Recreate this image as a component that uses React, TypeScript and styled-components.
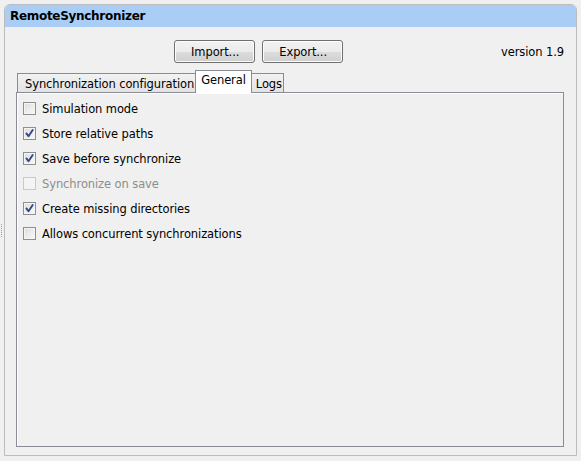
import React from 'react';
import styled, { createGlobalStyle } from 'styled-components';

const Global = createGlobalStyle`
  html, body { margin: 0; padding: 0; background: #f0f0f0; }
  body {
    font-family: "DejaVu Sans", Tahoma, sans-serif;
    font-size: 11.5px;
    color: #000;
    letter-spacing: -0.1px;
  }
  #root { width: 581px; height: 461px; }
`;

const Page = styled.div`
  display: flex;
  width: 581px;
  height: 461px;
  box-sizing: border-box;
`;

const Grip = styled.div`
  width: 4px;
  display: flex;
  align-items: center;
  flex-shrink: 0;
`;

const GripDots = styled.div`
  width: 1px;
  height: 14px;
  margin-left: 1px;
  background: repeating-linear-gradient(to bottom, #a0a0a0 0 1px, transparent 1px 2px);
`;

const Window = styled.div`
  margin: 4px 0 5px 0;
  width: 573px;
  height: 452px;
  box-sizing: border-box;
  border: 1px solid #bcbcbc;
  border-radius: 6px 6px 0 0;
  display: flex;
  flex-direction: column;
  overflow: hidden;
`;

const Header = styled.div`
  height: 22px;
  flex-shrink: 0;
  background: #a9cdf5;
  display: flex;
  align-items: center;
  padding-left: 5px;
  font-weight: bold;
  font-size: 12px;
  letter-spacing: -0.3px;
`;

const Body = styled.div`
  flex: 1;
  display: flex;
  flex-direction: column;
  padding: 13px 12px 8px 11px;
  min-height: 0;
`;

const TopRow = styled.div`
  display: flex;
  align-items: center;
  height: 23px;
`;

const ButtonGroup = styled.div`
  flex: 1;
  display: flex;
  justify-content: center;
  gap: 7px;
`;

const Button = styled.button`
  font: inherit;
  letter-spacing: inherit;
  height: 23px;
  padding: 0 15px 0 16px;
  border: 1px solid #707070;
  border-radius: 3px;
  background: linear-gradient(to bottom, #f2f2f2 0%, #ebebeb 50%, #dddddd 51%, #cfcfcf 100%);
  box-shadow: inset 0 0 0 1px #fcfcfc;
  color: #000;
`;

const Version = styled.span`
  white-space: nowrap;
`;

const TabStrip = styled.div`
  margin-top: 7px;
  display: flex;
  align-items: flex-end;
  height: 22px;
  padding-left: 1px;
  position: relative;
  z-index: 1;
`;

const Tab = styled.div<{ $active?: boolean; $pad?: string }>`
  box-sizing: border-box;
  border: 1px solid #898c95;
  border-bottom: none;
  white-space: nowrap;
  ${(p) =>
    p.$active
      ? `
    height: 23px;
    margin-bottom: -1px;
    background: #ffffff;
    padding: 2px 5px 0 5px;
    margin-left: -1px;
    margin-right: -1px;
    position: relative;
    z-index: 2;
  `
      : `
    height: 19px;
    background: linear-gradient(to bottom, #f2f2f2, #e3e3e3);
    padding: 3px ${p.$pad ?? '1px 0 7px'};
  `}
`;

const Pane = styled.div`
  flex: 1;
  box-sizing: border-box;
  border: 1px solid #898c95;
  box-shadow: inset 1px 1px 0 #ffffff;
  padding: 3px 6px;
  display: flex;
  flex-direction: column;
`;

const Row = styled.label<{ $disabled?: boolean }>`
  height: 25px;
  display: flex;
  align-items: center;
  gap: 6px;
  color: ${(p) => (p.$disabled ? '#8d8d8d' : '#000')};
`;

const Box = styled.span<{ $disabled?: boolean }>`
  width: 13px;
  height: 13px;
  box-sizing: border-box;
  border: 1px solid ${(p) => (p.$disabled ? '#c9c9c9' : '#8e8f8f')};
  background: ${(p) =>
    p.$disabled
      ? '#f4f4f4'
      : 'linear-gradient(135deg, #dcdcdc 0%, #eeeeee 60%, #fafafa 100%)'};
  box-shadow: inset 0 0 0 1px #f4f4f4;
  display: flex;
  align-items: center;
  justify-content: center;
  flex-shrink: 0;
`;

const Check = () => (
  <svg width="11" height="11" viewBox="0 0 11 11">
    <path d="M2.4 5.4 L4.5 8.3 L8.7 2" fill="none" stroke="#34488a" strokeWidth="1.9" strokeLinecap="round" strokeLinejoin="round" />
  </svg>
);

const options: { label: string; checked: boolean; disabled?: boolean }[] = [
  { label: 'Simulation mode', checked: false },
  { label: 'Store relative paths', checked: true },
  { label: 'Save before synchronize', checked: true },
  { label: 'Synchronize on save', checked: false, disabled: true },
  { label: 'Create missing directories', checked: true },
  { label: 'Allows concurrent synchronizations', checked: false },
];

export default function App() {
  return (
    <>
      <Global />
      <Page>
        <Grip>
          <GripDots />
        </Grip>
        <Window>
          <Header>RemoteSynchronizer</Header>
          <Body>
            <TopRow>
              <ButtonGroup>
                <Button>Import...</Button>
                <Button>Export...</Button>
              </ButtonGroup>
              <Version>version 1.9</Version>
            </TopRow>
            <TabStrip>
              <Tab $pad="1px 0 7px">Synchronization configuration</Tab>
              <Tab $active>General</Tab>
              <Tab $pad="1px 0 4px">Logs</Tab>
            </TabStrip>
            <Pane>
              {options.map((o) => (
                <Row key={o.label} $disabled={o.disabled}>
                  <Box $disabled={o.disabled}>{o.checked && <Check />}</Box>
                  {o.label}
                </Row>
              ))}
            </Pane>
          </Body>
        </Window>
      </Page>
    </>
  );
}
